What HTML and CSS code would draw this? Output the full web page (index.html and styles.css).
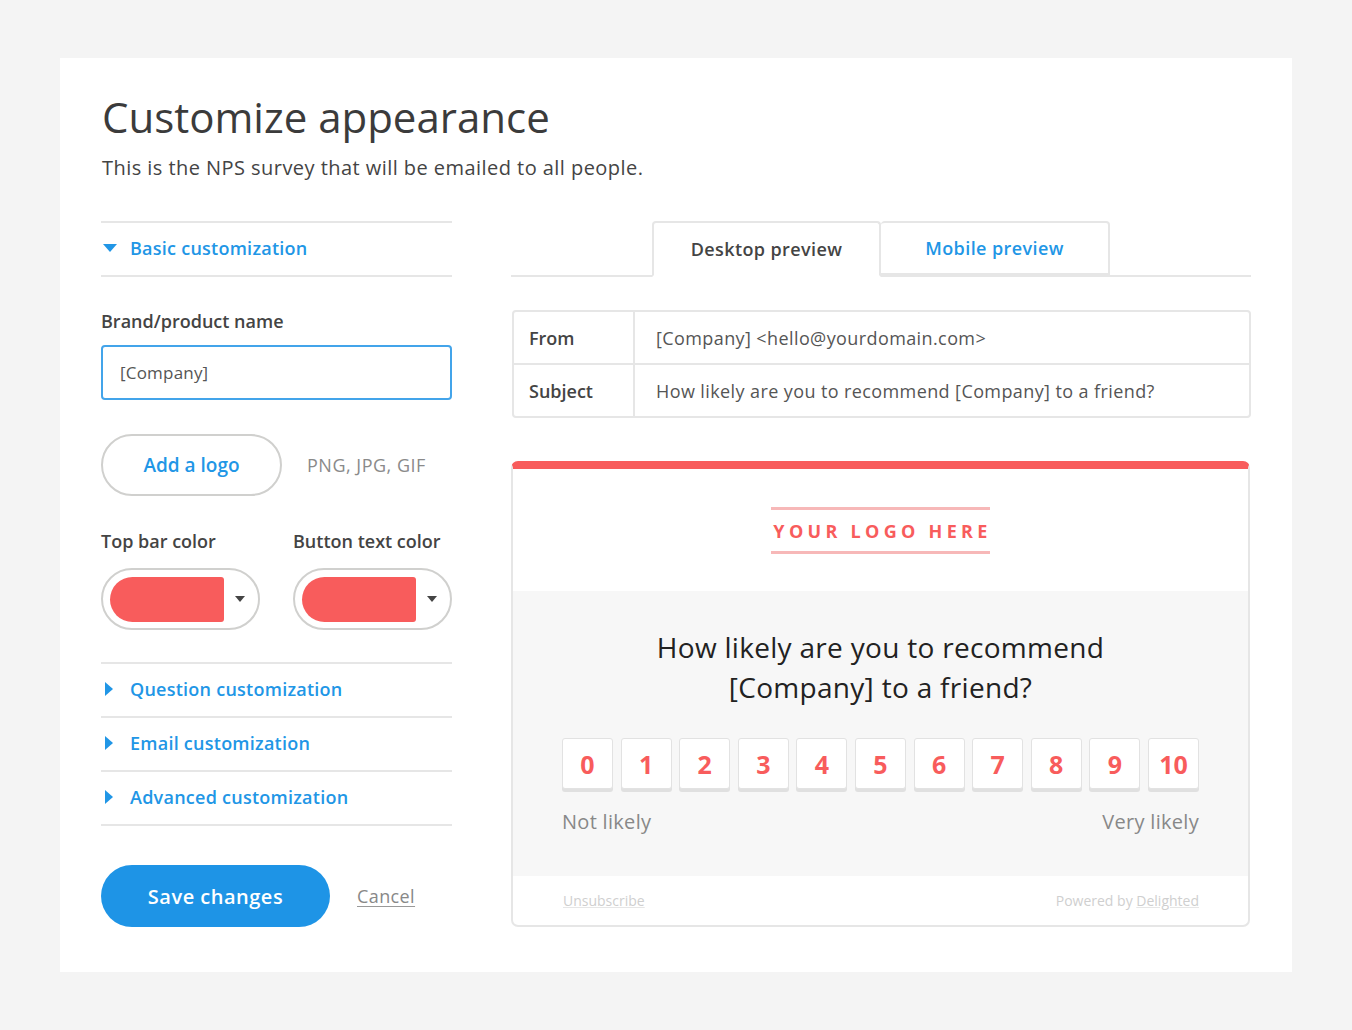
FILE: index.html
```html
<!DOCTYPE html>
<html lang="en">
<head>
<meta charset="utf-8">
<title>Customize appearance</title>
<link rel="stylesheet" href="styles.css">
</head>
<body>
<main class="card">
  <h1 class="title">Customize appearance</h1>
  <p class="subtitle">This is the NPS survey that will be emailed to all people.</p>

  <div class="columns">
    <section class="left">
      <div class="acc-row acc-open">
        <svg class="tri" width="14" height="8" viewBox="0 0 14 8"><polygon points="0,0 14,0 7,8" fill="#2196e6"/></svg>
        <span>Basic customization</span>
      </div>

      <div class="basic">
        <label class="field-label">Brand/product name</label>
        <div class="input">[Company]</div>

        <div class="logo-row">
          <button class="btn-outline">Add a logo</button>
          <span class="hint">PNG, JPG, GIF</span>
        </div>

        <div class="colors">
          <div class="color-field">
            <label class="field-label">Top bar color</label>
            <div class="picker">
              <span class="swatch"></span>
              <svg class="caret" width="10" height="6" viewBox="0 0 10 6"><polygon points="0,0 10,0 5,6" fill="#444"/></svg>
            </div>
          </div>
          <div class="color-field">
            <label class="field-label">Button text color</label>
            <div class="picker">
              <span class="swatch"></span>
              <svg class="caret" width="10" height="6" viewBox="0 0 10 6"><polygon points="0,0 10,0 5,6" fill="#444"/></svg>
            </div>
          </div>
        </div>
      </div>

      <div class="acc-list">
        <div class="acc-row">
          <svg class="tri-r" width="8" height="14" viewBox="0 0 8 14"><polygon points="0,0 8,7 0,14" fill="#2196e6"/></svg>
          <span>Question customization</span>
        </div>
        <div class="acc-row">
          <svg class="tri-r" width="8" height="14" viewBox="0 0 8 14"><polygon points="0,0 8,7 0,14" fill="#2196e6"/></svg>
          <span>Email customization</span>
        </div>
        <div class="acc-row acc-last">
          <svg class="tri-r" width="8" height="14" viewBox="0 0 8 14"><polygon points="0,0 8,7 0,14" fill="#2196e6"/></svg>
          <span>Advanced customization</span>
        </div>
      </div>

      <div class="actions">
        <button class="btn-primary">Save changes</button>
        <a class="cancel" href="#">Cancel</a>
      </div>
    </section>

    <section class="right">
      <div class="tabs">
        <div class="tab tab-active">Desktop preview</div>
        <div class="tab tab-link">Mobile preview</div>
      </div>

      <div class="mail-head">
        <div class="mh-row">
          <div class="mh-key">From</div>
          <div class="mh-val">[Company] &lt;hello@yourdomain.com&gt;</div>
        </div>
        <div class="mh-row">
          <div class="mh-key">Subject</div>
          <div class="mh-val">How likely are you to recommend [Company] to a friend?</div>
        </div>
      </div>

      <div class="preview">
        <div class="pv-logo">
          <div class="logo-box">YOUR LOGO HERE</div>
        </div>
        <div class="pv-body">
          <p class="question">How likely are you to recommend [Company] to a friend?</p>
          <div class="scale">
            <span class="num">0</span><span class="num">1</span><span class="num">2</span><span class="num">3</span><span class="num">4</span><span class="num">5</span><span class="num">6</span><span class="num">7</span><span class="num">8</span><span class="num">9</span><span class="num">10</span>
          </div>
          <div class="scale-labels">
            <span>Not likely</span>
            <span>Very likely</span>
          </div>
        </div>
        <div class="pv-foot">
          <a href="#" class="foot-link">Unsubscribe</a>
          <span class="powered">Powered by <a href="#" class="foot-link">Delighted</a></span>
        </div>
      </div>
    </section>
  </div>
</main>
</body>
</html>
```

FILE: styles.css
```css
* { box-sizing: border-box; }

html, body {
  margin: 0;
  padding: 0;
}

body {
  background: #f4f4f4;
  font-family: "Open Sans", "Lato", sans-serif;
  color: #444;
  padding: 58px 60px;
}

.card {
  background: #fff;
  height: 914px;
  padding: 34px 41px 0;
}

.title {
  margin: 0 0 0 1px;
  font-size: 42px;
  line-height: 50px;
  font-weight: 400;
  color: #3b3b3b;
  letter-spacing: 0;
}

.subtitle {
  margin: 12px 0 0 1px;
  font-size: 20px;
  line-height: 28px;
  color: #444;
  letter-spacing: 0.45px;
}

.columns {
  display: flex;
  gap: 59px;
  margin-top: 39px;
}

.left { width: 351px; flex: none; }
.right { width: 740px; flex: none; }

/* accordion */
.acc-row {
  height: 54px;
  border-top: 2px solid #e6e6e6;
  display: flex;
  align-items: center;
  padding-bottom: 2px;
  color: #2196e6;
  font-size: 18px;
  font-weight: 600;
  letter-spacing: 0.25px;
}
.acc-open { border-bottom: 2px solid #e6e6e6; height: 56px; }
.acc-last { border-bottom: 2px solid #e6e6e6; height: 56px; }
.acc-row .tri { margin: 0 13px 0 2px; }
.acc-row .tri-r { margin: 0 17px 0 4px; }

.basic { padding-top: 32px; }

.field-label {
  display: block;
  font-size: 18px;
  line-height: 24px;
  font-weight: 600;
  color: #444;
}

.input {
  margin-top: 12px;
  height: 55px;
  border: 2px solid #43a4ea;
  border-radius: 4px;
  padding: 0 17px;
  display: flex;
  align-items: center;
  font-size: 17px;
  letter-spacing: 0.2px;
  color: #555;
}

.logo-row {
  margin-top: 34px;
  display: flex;
  align-items: center;
}

.btn-outline {
  width: 181px;
  height: 62px;
  border: 2px solid #d0d0ce;
  border-radius: 31px;
  background: #fff;
  color: #2196e6;
  font-family: inherit;
  font-size: 19px;
  font-weight: 600;
  padding: 0;
}

.hint {
  margin-left: 25px;
  font-size: 18px;
  letter-spacing: 0.5px;
  color: #8a8a8a;
}

.colors {
  margin-top: 33px;
  display: flex;
  justify-content: space-between;
}

.color-field { width: 159px; }

.picker {
  margin-top: 15px;
  height: 62px;
  border: 2px solid #d0d0ce;
  border-radius: 31px;
  display: flex;
  align-items: center;
  padding-left: 7px;
}

.swatch {
  width: 114px;
  height: 45px;
  background: #f85c5c;
  border-radius: 23px 3px 3px 23px;
}

.caret { margin-left: 11px; }

.acc-list { margin-top: 32px; }

.actions {
  margin-top: 39px;
  display: flex;
  align-items: center;
}

.btn-primary {
  width: 229px;
  height: 62px;
  border: none;
  border-radius: 31px;
  background: #1e94e6;
  color: #fff;
  font-family: inherit;
  font-size: 20px;
  font-weight: 600;
  letter-spacing: 0.5px;
  padding: 0;
}

.cancel {
  margin-left: 27px;
  font-size: 18px;
  letter-spacing: 0.4px;
  color: #888;
  text-decoration: underline;
  text-decoration-color: #999;
  text-underline-offset: 3px;
}

/* tabs */
.tabs {
  height: 56px;
  border-bottom: 2px solid #e6e6e6;
  display: flex;
  padding-left: 141px;
}

.tab {
  width: 229px;
  height: 56px;
  border: 2px solid #e6e6e6;
  border-radius: 4px 4px 0 0;
  display: flex;
  align-items: center;
  justify-content: center;
  font-size: 18px;
  font-weight: 600;
  letter-spacing: 0.4px;
  background: #fff;
}
.tab-active {
  color: #444;
  border-bottom-color: #fff;
  position: relative;
  z-index: 1;
}
.tab-link {
  color: #2196e6;
  border-left: none;
  height: 54px;
}

/* email header */
.mail-head {
  margin: 33px 0 0 1px;
  border: 2px solid #e6e6e6;
  border-radius: 4px;
}
.mh-row {
  display: flex;
  height: 51px;
}
.mh-row + .mh-row {
  border-top: 2px solid #e6e6e6;
  height: 53px;
}
.mh-key {
  width: 121px;
  border-right: 2px solid #e6e6e6;
  display: flex;
  align-items: center;
  padding-left: 15px;
  font-size: 18px;
  font-weight: 600;
  color: #444;
}
.mh-val {
  display: flex;
  align-items: center;
  padding-left: 21px;
  font-size: 18px;
  letter-spacing: 0.4px;
  color: #555;
}

/* preview */
.preview {
  margin-top: 43px;
  width: 739px;
  border: 2px solid #e6e6e6;
  border-top: 8px solid #f85c5c;
  border-radius: 7px;
  overflow: hidden;
}

.pv-logo {
  height: 122px;
  display: flex;
  justify-content: center;
  padding-top: 38px;
}

.logo-box {
  width: 219px;
  height: 47px;
  border-top: 3px solid #f7b8b8;
  border-bottom: 3px solid #f7b8b8;
  display: flex;
  align-items: center;
  justify-content: center;
  color: #f85c5c;
  font-size: 18px;
  font-weight: 700;
  letter-spacing: 4.3px;
  padding-left: 4px;
  white-space: nowrap;
}

.pv-body {
  background: #f7f7f7;
  height: 285px;
  padding: 36px 49px 0;
}

.question {
  margin: 0 auto;
  max-width: 520px;
  text-align: center;
  font-size: 28px;
  line-height: 40px;
  letter-spacing: 0.3px;
  color: #222;
}

.scale {
  margin-top: 31px;
  display: flex;
  justify-content: space-between;
}

.num {
  width: 51px;
  height: 51px;
  background: #fff;
  border: 1px solid #e2e2e2;
  border-radius: 3px;
  box-shadow: 0 3px 0 #e0e0e0;
  display: flex;
  align-items: center;
  justify-content: center;
  color: #f85c5c;
  font-size: 25px;
  font-weight: 700;
}

.scale-labels {
  margin-top: 21px;
  display: flex;
  justify-content: space-between;
  font-size: 20px;
  line-height: 24px;
  letter-spacing: 0.3px;
  color: #888;
}

.pv-foot {
  height: 49px;
  display: flex;
  align-items: center;
  justify-content: space-between;
  padding: 0 49px 0 50px;
  font-size: 14px;
  color: #cfcfcf;
}

.foot-link {
  color: #cfcfcf;
  text-decoration: underline;
  text-decoration-color: #e6e6e6;
}
```
